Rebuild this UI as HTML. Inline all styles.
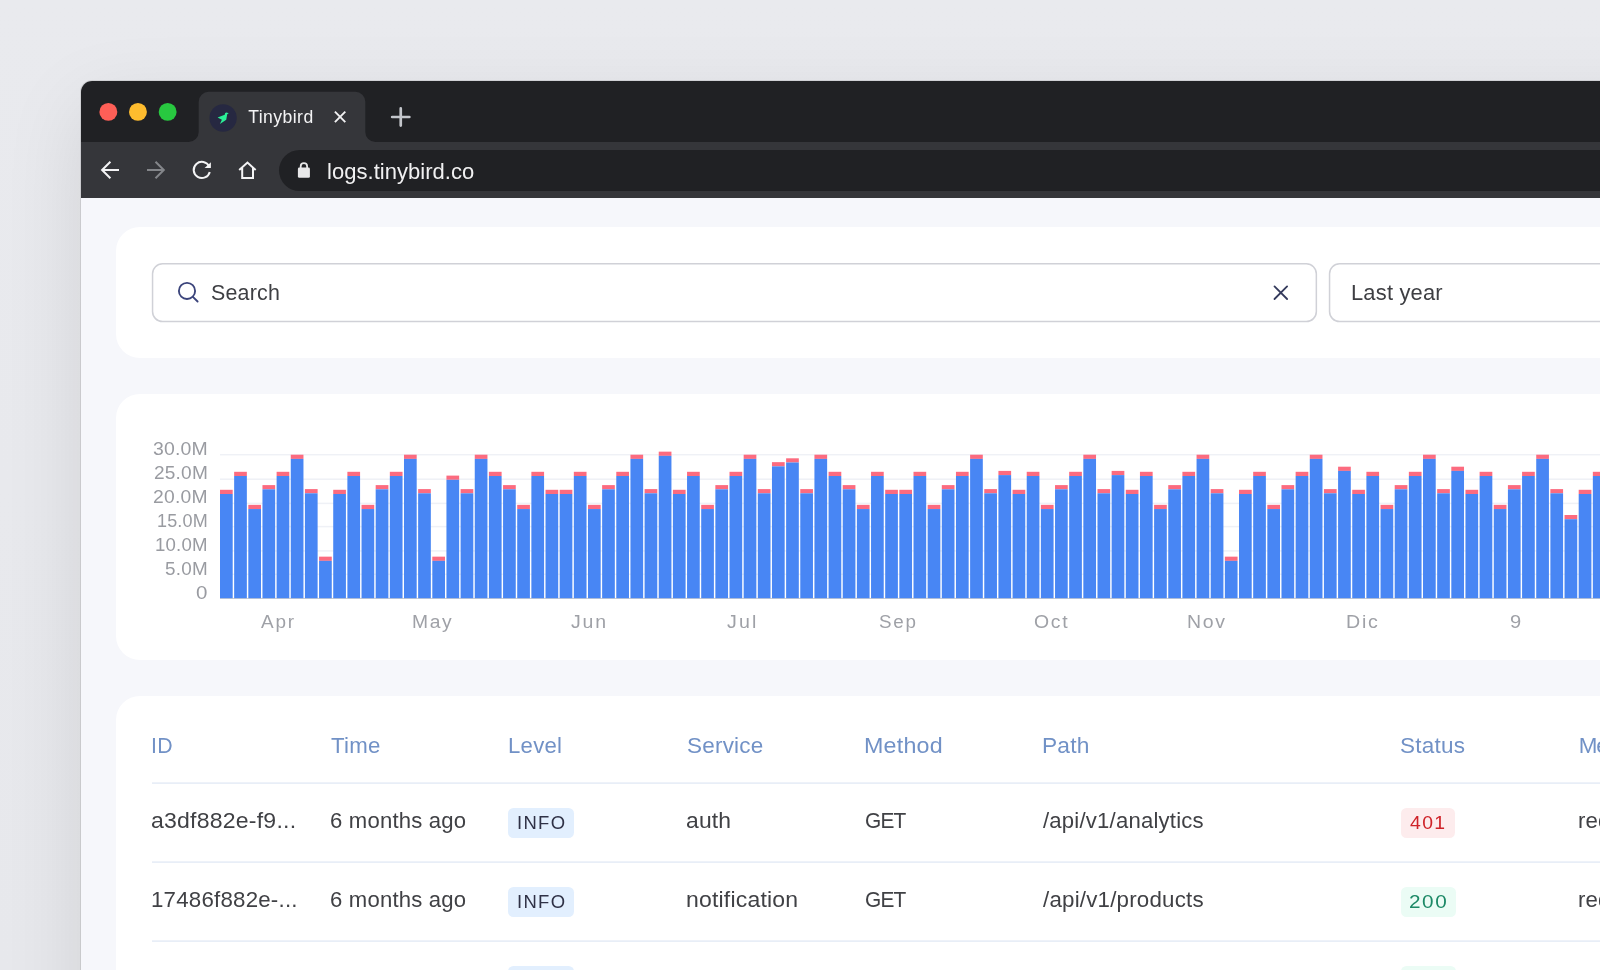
<!DOCTYPE html>
<html lang="en"><head><meta charset="utf-8"><title>Tinybird</title>
<style>
*{box-sizing:border-box;margin:0;padding:0}
html,body{width:1600px;height:970px;overflow:hidden}
body{background:#e8e9ed;font-family:"Liberation Sans",sans-serif;position:relative}
.abs{position:absolute}
.stage{position:absolute;left:0;top:0;width:1600px;height:970px;overflow:hidden;
  background:linear-gradient(180deg,#e9eaee 0%,#e7e8ec 100%)}
.win{position:absolute;left:81px;top:81.25px;width:1700px;height:1000px;border-radius:11px 0 0 0;
  background:#f6f7fb;box-shadow:0 0 0 1px rgba(0,0,0,.085),0 25px 80px rgba(0,0,0,.10);overflow:hidden}
.title{position:absolute;left:0;top:0;width:100%;height:60.5px;background:#202124}
.tool{position:absolute;left:0;top:60.5px;width:100%;height:56.25px;background:#35363a}
.url{position:absolute;left:278.6px;top:149.6px;width:1500px;height:41.3px;border-radius:21px;background:#202124}
.tx{position:absolute;white-space:nowrap;transform-origin:0 0}
.txl{position:absolute;left:0;top:0;width:1600px;height:970px;will-change:transform}
.urltxt{font-size:22px;line-height:24px;color:#f1f1f2}
.tabtxt{font-size:17.6px;line-height:22px;color:#f4f4f5}
.card{position:absolute;left:116.25px;width:1600px;background:#fff;border-radius:24px 0 0 24px}
.t21{font-size:22.3px;line-height:26px;color:#3e3f43}
.xl{font-size:17.5px;line-height:20px;color:#9fa1a7}
.ylt{font-size:18.8px;line-height:20px;color:#999ba1}
.th{font-size:22.4px;line-height:26px;color:#7191c6}
.td{font-size:22.2px;line-height:26px;color:#404145}
.bdg{position:absolute;height:29.9px;border-radius:5.5px}
.bt{font-size:18px;line-height:30px}
.bn{font-size:18.5px;line-height:30px}
</style></head>
<body>
<div class="stage">
<div class="win">
  <div class="title"></div>
  <div class="tool"></div>
</div>

<!-- browser chrome: tab shape + icons -->
<svg class="abs" style="left:0;top:0" width="1600" height="220" viewBox="0 0 1600 220">
  <path d="M188.7 141.9 A10 10 0 0 0 198.7 131.9 L198.7 101.7 A10 10 0 0 1 208.7 91.7 L355.3 91.7 A10 10 0 0 1 365.3 101.7 L365.3 131.9 A10 10 0 0 0 375.3 141.9 Z" fill="#35363a"/>
  <circle cx="108.35" cy="111.9" r="8.95" fill="#fe5f57"/><circle cx="137.95" cy="111.9" r="8.95" fill="#febc2e"/><circle cx="167.65" cy="111.9" r="8.95" fill="#28c840"/>
  <circle cx="223.1" cy="118" r="13.65" fill="#262841"/>
  <path d="M217.6 117.5 L224.7 114.75 L225.15 112.9 L226.55 112.4 L228.75 113.35 L227.2 114.3 L226.25 119.7 L219.9 124.05 L221.9 119.85 Z" fill="#2bef97"/>
  <path d="M334.9 111.7 L345.3 122.1 M345.3 111.7 L334.9 122.1" stroke="#f1f1f2" stroke-width="1.9" fill="none"/>
  <path d="M392.15 117 L409.35 117 M400.75 108.4 L400.75 125.6" stroke="#c3c6cb" stroke-width="2.7" stroke-linecap="round" fill="none"/>
  <path d="M119 170 L102.4 170 M110.4 161.7 L102.1 170 L110.4 178.3" stroke="#f4f4f5" stroke-width="2" fill="none" stroke-linejoin="miter"/>
  <path d="M147 170 L163.5 170 M155.5 161.7 L163.8 170 L155.5 178.3" stroke="#84868a" stroke-width="2" fill="none"/>
  <path d="M209.2 166.4 A8.15 8.15 0 1 0 209.75 171.9" stroke="#f4f4f5" stroke-width="2" fill="none"/>
  <path d="M210.9 162.2 L210.9 168 L204.6 168 Z" fill="#f4f4f5"/>
  <path d="M239.2 170 L247.45 162.6 L255.7 170 M242.2 168 L242.2 178 L253 178 L253 168" stroke="#f4f4f5" stroke-width="2" fill="none"/>
</svg>
<div class="url"></div>
<svg class="abs" style="left:290px;top:155px" width="30" height="30" viewBox="290 155 30 30">
  <path d="M300.7 168 L300.7 166.3 A3.2 3.2 0 0 1 307.1 166.3 L307.1 168" stroke="#e8e8e9" stroke-width="1.8" fill="none"/>
  <rect x="297.9" y="167.6" width="12" height="10.2" rx="1.4" fill="#e8e8e9"/>
</svg>

<!-- card 1: search -->
<div class="card" style="top:227px;height:131px"></div>
<svg class="abs" style="left:0;top:250px" width="1600" height="90" viewBox="0 250 1600 90">
  <rect x="152.55" y="263.75" width="1163.8" height="57.8" rx="10" fill="#fff" stroke="#d0d1d7" stroke-width="1.5"/>
  <rect x="1329.55" y="263.75" width="400" height="57.8" rx="10" fill="#fff" stroke="#d0d1d7" stroke-width="1.5"/>
</svg>
<svg class="abs" style="left:170px;top:275px" width="40" height="34" viewBox="170 275 40 34">
  <circle cx="187" cy="290.9" r="8.1" stroke="#3b447b" stroke-width="1.85" fill="none"/>
  <path d="M192.9 296.9 L197.6 301.5" stroke="#3b447b" stroke-width="1.85" stroke-linecap="round"/>
</svg>
<svg class="abs" style="left:1268px;top:280px" width="26" height="26" viewBox="1268 280 26 26">
  <path d="M1274.5 286.4 L1287.1 299 M1287.1 286.4 L1274.5 299" stroke="#343a5c" stroke-width="1.8" stroke-linecap="round" fill="none"/>
</svg>

<!-- card 2: chart -->
<div class="card" style="top:394px;height:266.3px"></div>
<svg class="abs" style="left:0;top:0" width="1600" height="970" viewBox="0 0 1600 970"><rect x="220" y="453.95" width="1400" height="1.5" fill="#eff1f6"/><rect x="220" y="478.45" width="1400" height="1.5" fill="#eff1f6"/><rect x="220" y="502.65" width="1400" height="1.5" fill="#eff1f6"/><rect x="220" y="525.85" width="1400" height="1.5" fill="#eff1f6"/><rect x="220" y="550.15" width="1400" height="1.5" fill="#eff1f6"/><rect x="220" y="573.55" width="1400" height="1.5" fill="#eff1f6"/><rect x="220" y="597.9" width="1400" height="1.1" fill="#c9cbd0"/><rect x="220.00" y="489.80" width="12.7" height="4.2" fill="#fc6b7f"/><rect x="220.00" y="494.00" width="12.7" height="104.20" fill="#4886f4"/><rect x="234.15" y="471.80" width="12.7" height="4.2" fill="#fc6b7f"/><rect x="234.15" y="476.00" width="12.7" height="122.20" fill="#4886f4"/><rect x="248.31" y="504.85" width="12.7" height="4.2" fill="#fc6b7f"/><rect x="248.31" y="509.05" width="12.7" height="89.15" fill="#4886f4"/><rect x="262.46" y="485.10" width="12.7" height="4.2" fill="#fc6b7f"/><rect x="262.46" y="489.30" width="12.7" height="108.90" fill="#4886f4"/><rect x="276.61" y="471.80" width="12.7" height="4.2" fill="#fc6b7f"/><rect x="276.61" y="476.00" width="12.7" height="122.20" fill="#4886f4"/><rect x="290.76" y="454.70" width="12.7" height="4.2" fill="#fc6b7f"/><rect x="290.76" y="458.90" width="12.7" height="139.30" fill="#4886f4"/><rect x="304.92" y="489.10" width="12.7" height="4.2" fill="#fc6b7f"/><rect x="304.92" y="493.30" width="12.7" height="104.90" fill="#4886f4"/><rect x="319.07" y="556.65" width="12.7" height="4.2" fill="#fc6b7f"/><rect x="319.07" y="560.85" width="12.7" height="37.35" fill="#4886f4"/><rect x="333.22" y="489.80" width="12.7" height="4.2" fill="#fc6b7f"/><rect x="333.22" y="494.00" width="12.7" height="104.20" fill="#4886f4"/><rect x="347.38" y="471.80" width="12.7" height="4.2" fill="#fc6b7f"/><rect x="347.38" y="476.00" width="12.7" height="122.20" fill="#4886f4"/><rect x="361.53" y="504.85" width="12.7" height="4.2" fill="#fc6b7f"/><rect x="361.53" y="509.05" width="12.7" height="89.15" fill="#4886f4"/><rect x="375.68" y="485.10" width="12.7" height="4.2" fill="#fc6b7f"/><rect x="375.68" y="489.30" width="12.7" height="108.90" fill="#4886f4"/><rect x="389.84" y="471.80" width="12.7" height="4.2" fill="#fc6b7f"/><rect x="389.84" y="476.00" width="12.7" height="122.20" fill="#4886f4"/><rect x="403.99" y="454.70" width="12.7" height="4.2" fill="#fc6b7f"/><rect x="403.99" y="458.90" width="12.7" height="139.30" fill="#4886f4"/><rect x="418.14" y="489.10" width="12.7" height="4.2" fill="#fc6b7f"/><rect x="418.14" y="493.30" width="12.7" height="104.90" fill="#4886f4"/><rect x="432.30" y="556.65" width="12.7" height="4.2" fill="#fc6b7f"/><rect x="432.30" y="560.85" width="12.7" height="37.35" fill="#4886f4"/><rect x="446.45" y="475.60" width="12.7" height="4.2" fill="#fc6b7f"/><rect x="446.45" y="479.80" width="12.7" height="118.40" fill="#4886f4"/><rect x="460.60" y="489.10" width="12.7" height="4.2" fill="#fc6b7f"/><rect x="460.60" y="493.30" width="12.7" height="104.90" fill="#4886f4"/><rect x="474.75" y="454.70" width="12.7" height="4.2" fill="#fc6b7f"/><rect x="474.75" y="458.90" width="12.7" height="139.30" fill="#4886f4"/><rect x="488.91" y="471.80" width="12.7" height="4.2" fill="#fc6b7f"/><rect x="488.91" y="476.00" width="12.7" height="122.20" fill="#4886f4"/><rect x="503.06" y="485.10" width="12.7" height="4.2" fill="#fc6b7f"/><rect x="503.06" y="489.30" width="12.7" height="108.90" fill="#4886f4"/><rect x="517.21" y="504.85" width="12.7" height="4.2" fill="#fc6b7f"/><rect x="517.21" y="509.05" width="12.7" height="89.15" fill="#4886f4"/><rect x="531.37" y="471.80" width="12.7" height="4.2" fill="#fc6b7f"/><rect x="531.37" y="476.00" width="12.7" height="122.20" fill="#4886f4"/><rect x="545.52" y="489.80" width="12.7" height="4.2" fill="#fc6b7f"/><rect x="545.52" y="494.00" width="12.7" height="104.20" fill="#4886f4"/><rect x="559.67" y="489.80" width="12.7" height="4.2" fill="#fc6b7f"/><rect x="559.67" y="494.00" width="12.7" height="104.20" fill="#4886f4"/><rect x="573.83" y="471.80" width="12.7" height="4.2" fill="#fc6b7f"/><rect x="573.83" y="476.00" width="12.7" height="122.20" fill="#4886f4"/><rect x="587.98" y="504.85" width="12.7" height="4.2" fill="#fc6b7f"/><rect x="587.98" y="509.05" width="12.7" height="89.15" fill="#4886f4"/><rect x="602.13" y="485.10" width="12.7" height="4.2" fill="#fc6b7f"/><rect x="602.13" y="489.30" width="12.7" height="108.90" fill="#4886f4"/><rect x="616.28" y="471.80" width="12.7" height="4.2" fill="#fc6b7f"/><rect x="616.28" y="476.00" width="12.7" height="122.20" fill="#4886f4"/><rect x="630.44" y="454.70" width="12.7" height="4.2" fill="#fc6b7f"/><rect x="630.44" y="458.90" width="12.7" height="139.30" fill="#4886f4"/><rect x="644.59" y="489.10" width="12.7" height="4.2" fill="#fc6b7f"/><rect x="644.59" y="493.30" width="12.7" height="104.90" fill="#4886f4"/><rect x="658.74" y="451.65" width="12.7" height="4.2" fill="#fc6b7f"/><rect x="658.74" y="455.85" width="12.7" height="142.35" fill="#4886f4"/><rect x="672.90" y="489.80" width="12.7" height="4.2" fill="#fc6b7f"/><rect x="672.90" y="494.00" width="12.7" height="104.20" fill="#4886f4"/><rect x="687.05" y="471.80" width="12.7" height="4.2" fill="#fc6b7f"/><rect x="687.05" y="476.00" width="12.7" height="122.20" fill="#4886f4"/><rect x="701.20" y="504.85" width="12.7" height="4.2" fill="#fc6b7f"/><rect x="701.20" y="509.05" width="12.7" height="89.15" fill="#4886f4"/><rect x="715.36" y="485.10" width="12.7" height="4.2" fill="#fc6b7f"/><rect x="715.36" y="489.30" width="12.7" height="108.90" fill="#4886f4"/><rect x="729.51" y="471.80" width="12.7" height="4.2" fill="#fc6b7f"/><rect x="729.51" y="476.00" width="12.7" height="122.20" fill="#4886f4"/><rect x="743.66" y="454.70" width="12.7" height="4.2" fill="#fc6b7f"/><rect x="743.66" y="458.90" width="12.7" height="139.30" fill="#4886f4"/><rect x="757.81" y="489.10" width="12.7" height="4.2" fill="#fc6b7f"/><rect x="757.81" y="493.30" width="12.7" height="104.90" fill="#4886f4"/><rect x="771.97" y="462.15" width="12.7" height="4.2" fill="#fc6b7f"/><rect x="771.97" y="466.35" width="12.7" height="131.85" fill="#4886f4"/><rect x="786.12" y="458.30" width="12.7" height="4.2" fill="#fc6b7f"/><rect x="786.12" y="462.50" width="12.7" height="135.70" fill="#4886f4"/><rect x="800.27" y="489.10" width="12.7" height="4.2" fill="#fc6b7f"/><rect x="800.27" y="493.30" width="12.7" height="104.90" fill="#4886f4"/><rect x="814.43" y="454.70" width="12.7" height="4.2" fill="#fc6b7f"/><rect x="814.43" y="458.90" width="12.7" height="139.30" fill="#4886f4"/><rect x="828.58" y="471.80" width="12.7" height="4.2" fill="#fc6b7f"/><rect x="828.58" y="476.00" width="12.7" height="122.20" fill="#4886f4"/><rect x="842.73" y="485.10" width="12.7" height="4.2" fill="#fc6b7f"/><rect x="842.73" y="489.30" width="12.7" height="108.90" fill="#4886f4"/><rect x="856.88" y="504.85" width="12.7" height="4.2" fill="#fc6b7f"/><rect x="856.88" y="509.05" width="12.7" height="89.15" fill="#4886f4"/><rect x="871.04" y="471.80" width="12.7" height="4.2" fill="#fc6b7f"/><rect x="871.04" y="476.00" width="12.7" height="122.20" fill="#4886f4"/><rect x="885.19" y="489.80" width="12.7" height="4.2" fill="#fc6b7f"/><rect x="885.19" y="494.00" width="12.7" height="104.20" fill="#4886f4"/><rect x="899.34" y="489.80" width="12.7" height="4.2" fill="#fc6b7f"/><rect x="899.34" y="494.00" width="12.7" height="104.20" fill="#4886f4"/><rect x="913.50" y="471.80" width="12.7" height="4.2" fill="#fc6b7f"/><rect x="913.50" y="476.00" width="12.7" height="122.20" fill="#4886f4"/><rect x="927.65" y="504.85" width="12.7" height="4.2" fill="#fc6b7f"/><rect x="927.65" y="509.05" width="12.7" height="89.15" fill="#4886f4"/><rect x="941.80" y="485.10" width="12.7" height="4.2" fill="#fc6b7f"/><rect x="941.80" y="489.30" width="12.7" height="108.90" fill="#4886f4"/><rect x="955.96" y="471.80" width="12.7" height="4.2" fill="#fc6b7f"/><rect x="955.96" y="476.00" width="12.7" height="122.20" fill="#4886f4"/><rect x="970.11" y="454.70" width="12.7" height="4.2" fill="#fc6b7f"/><rect x="970.11" y="458.90" width="12.7" height="139.30" fill="#4886f4"/><rect x="984.26" y="489.10" width="12.7" height="4.2" fill="#fc6b7f"/><rect x="984.26" y="493.30" width="12.7" height="104.90" fill="#4886f4"/><rect x="998.42" y="470.90" width="12.7" height="4.2" fill="#fc6b7f"/><rect x="998.42" y="475.10" width="12.7" height="123.10" fill="#4886f4"/><rect x="1012.57" y="489.80" width="12.7" height="4.2" fill="#fc6b7f"/><rect x="1012.57" y="494.00" width="12.7" height="104.20" fill="#4886f4"/><rect x="1026.72" y="471.80" width="12.7" height="4.2" fill="#fc6b7f"/><rect x="1026.72" y="476.00" width="12.7" height="122.20" fill="#4886f4"/><rect x="1040.87" y="504.85" width="12.7" height="4.2" fill="#fc6b7f"/><rect x="1040.87" y="509.05" width="12.7" height="89.15" fill="#4886f4"/><rect x="1055.03" y="485.10" width="12.7" height="4.2" fill="#fc6b7f"/><rect x="1055.03" y="489.30" width="12.7" height="108.90" fill="#4886f4"/><rect x="1069.18" y="471.80" width="12.7" height="4.2" fill="#fc6b7f"/><rect x="1069.18" y="476.00" width="12.7" height="122.20" fill="#4886f4"/><rect x="1083.33" y="454.70" width="12.7" height="4.2" fill="#fc6b7f"/><rect x="1083.33" y="458.90" width="12.7" height="139.30" fill="#4886f4"/><rect x="1097.49" y="489.10" width="12.7" height="4.2" fill="#fc6b7f"/><rect x="1097.49" y="493.30" width="12.7" height="104.90" fill="#4886f4"/><rect x="1111.64" y="470.90" width="12.7" height="4.2" fill="#fc6b7f"/><rect x="1111.64" y="475.10" width="12.7" height="123.10" fill="#4886f4"/><rect x="1125.79" y="489.80" width="12.7" height="4.2" fill="#fc6b7f"/><rect x="1125.79" y="494.00" width="12.7" height="104.20" fill="#4886f4"/><rect x="1139.95" y="471.80" width="12.7" height="4.2" fill="#fc6b7f"/><rect x="1139.95" y="476.00" width="12.7" height="122.20" fill="#4886f4"/><rect x="1154.10" y="504.85" width="12.7" height="4.2" fill="#fc6b7f"/><rect x="1154.10" y="509.05" width="12.7" height="89.15" fill="#4886f4"/><rect x="1168.25" y="485.10" width="12.7" height="4.2" fill="#fc6b7f"/><rect x="1168.25" y="489.30" width="12.7" height="108.90" fill="#4886f4"/><rect x="1182.40" y="471.80" width="12.7" height="4.2" fill="#fc6b7f"/><rect x="1182.40" y="476.00" width="12.7" height="122.20" fill="#4886f4"/><rect x="1196.56" y="454.70" width="12.7" height="4.2" fill="#fc6b7f"/><rect x="1196.56" y="458.90" width="12.7" height="139.30" fill="#4886f4"/><rect x="1210.71" y="489.10" width="12.7" height="4.2" fill="#fc6b7f"/><rect x="1210.71" y="493.30" width="12.7" height="104.90" fill="#4886f4"/><rect x="1224.86" y="556.65" width="12.7" height="4.2" fill="#fc6b7f"/><rect x="1224.86" y="560.85" width="12.7" height="37.35" fill="#4886f4"/><rect x="1239.02" y="489.80" width="12.7" height="4.2" fill="#fc6b7f"/><rect x="1239.02" y="494.00" width="12.7" height="104.20" fill="#4886f4"/><rect x="1253.17" y="471.80" width="12.7" height="4.2" fill="#fc6b7f"/><rect x="1253.17" y="476.00" width="12.7" height="122.20" fill="#4886f4"/><rect x="1267.32" y="504.85" width="12.7" height="4.2" fill="#fc6b7f"/><rect x="1267.32" y="509.05" width="12.7" height="89.15" fill="#4886f4"/><rect x="1281.48" y="485.10" width="12.7" height="4.2" fill="#fc6b7f"/><rect x="1281.48" y="489.30" width="12.7" height="108.90" fill="#4886f4"/><rect x="1295.63" y="471.80" width="12.7" height="4.2" fill="#fc6b7f"/><rect x="1295.63" y="476.00" width="12.7" height="122.20" fill="#4886f4"/><rect x="1309.78" y="454.70" width="12.7" height="4.2" fill="#fc6b7f"/><rect x="1309.78" y="458.90" width="12.7" height="139.30" fill="#4886f4"/><rect x="1323.93" y="489.10" width="12.7" height="4.2" fill="#fc6b7f"/><rect x="1323.93" y="493.30" width="12.7" height="104.90" fill="#4886f4"/><rect x="1338.09" y="466.70" width="12.7" height="4.2" fill="#fc6b7f"/><rect x="1338.09" y="470.90" width="12.7" height="127.30" fill="#4886f4"/><rect x="1352.24" y="489.80" width="12.7" height="4.2" fill="#fc6b7f"/><rect x="1352.24" y="494.00" width="12.7" height="104.20" fill="#4886f4"/><rect x="1366.39" y="471.80" width="12.7" height="4.2" fill="#fc6b7f"/><rect x="1366.39" y="476.00" width="12.7" height="122.20" fill="#4886f4"/><rect x="1380.55" y="504.85" width="12.7" height="4.2" fill="#fc6b7f"/><rect x="1380.55" y="509.05" width="12.7" height="89.15" fill="#4886f4"/><rect x="1394.70" y="485.10" width="12.7" height="4.2" fill="#fc6b7f"/><rect x="1394.70" y="489.30" width="12.7" height="108.90" fill="#4886f4"/><rect x="1408.85" y="471.80" width="12.7" height="4.2" fill="#fc6b7f"/><rect x="1408.85" y="476.00" width="12.7" height="122.20" fill="#4886f4"/><rect x="1423.01" y="454.70" width="12.7" height="4.2" fill="#fc6b7f"/><rect x="1423.01" y="458.90" width="12.7" height="139.30" fill="#4886f4"/><rect x="1437.16" y="489.10" width="12.7" height="4.2" fill="#fc6b7f"/><rect x="1437.16" y="493.30" width="12.7" height="104.90" fill="#4886f4"/><rect x="1451.31" y="466.70" width="12.7" height="4.2" fill="#fc6b7f"/><rect x="1451.31" y="470.90" width="12.7" height="127.30" fill="#4886f4"/><rect x="1465.46" y="489.80" width="12.7" height="4.2" fill="#fc6b7f"/><rect x="1465.46" y="494.00" width="12.7" height="104.20" fill="#4886f4"/><rect x="1479.62" y="471.80" width="12.7" height="4.2" fill="#fc6b7f"/><rect x="1479.62" y="476.00" width="12.7" height="122.20" fill="#4886f4"/><rect x="1493.77" y="504.85" width="12.7" height="4.2" fill="#fc6b7f"/><rect x="1493.77" y="509.05" width="12.7" height="89.15" fill="#4886f4"/><rect x="1507.92" y="485.10" width="12.7" height="4.2" fill="#fc6b7f"/><rect x="1507.92" y="489.30" width="12.7" height="108.90" fill="#4886f4"/><rect x="1522.08" y="471.80" width="12.7" height="4.2" fill="#fc6b7f"/><rect x="1522.08" y="476.00" width="12.7" height="122.20" fill="#4886f4"/><rect x="1536.23" y="454.70" width="12.7" height="4.2" fill="#fc6b7f"/><rect x="1536.23" y="458.90" width="12.7" height="139.30" fill="#4886f4"/><rect x="1550.38" y="489.10" width="12.7" height="4.2" fill="#fc6b7f"/><rect x="1550.38" y="493.30" width="12.7" height="104.90" fill="#4886f4"/><rect x="1564.54" y="515.00" width="12.7" height="4.2" fill="#fc6b7f"/><rect x="1564.54" y="519.20" width="12.7" height="79.00" fill="#4886f4"/><rect x="1578.69" y="489.80" width="12.7" height="4.2" fill="#fc6b7f"/><rect x="1578.69" y="494.00" width="12.7" height="104.20" fill="#4886f4"/><rect x="1592.84" y="471.80" width="12.7" height="4.2" fill="#fc6b7f"/><rect x="1592.84" y="476.00" width="12.7" height="122.20" fill="#4886f4"/></svg>


<!-- card 3: table -->
<div class="card" style="top:695.8px;height:400px"></div>
<svg class="abs" style="left:0;top:770px" width="1600" height="200" viewBox="0 770 1600 200">
  <rect x="152" y="782.35" width="1500" height="1.5" fill="#e5ecf6"/>
  <rect x="152" y="861.35" width="1500" height="1.5" fill="#e5ecf6"/>
  <rect x="152" y="940.35" width="1500" height="1.5" fill="#e5ecf6"/>
</svg>
<div class="bdg" style="left:508.4px;top:807.8px;width:65.8px;background:#e2effe"></div>
<div class="bdg" style="left:508.4px;top:886.8px;width:65.8px;background:#e2effe"></div>
<div class="bdg" style="left:508.4px;top:965.9px;width:65.8px;background:#e2effe"></div>
<div class="bdg" style="left:1400.7px;top:807.7px;width:53.9px;background:#fdeced"></div>
<div class="bdg" style="left:1400.7px;top:886.8px;width:55.7px;background:#ebfcf5"></div>
<div class="bdg" style="left:1400.7px;top:965.9px;width:55.7px;background:#ebfcf5"></div>
<div class="txl">
<div class="tx th" style="left:1578.85px;top:732.5px;letter-spacing:-1.2px">Message</div>
<div class="tx td" style="left:1577.9px;top:808px;letter-spacing:.2px">request completed</div>
<div class="tx td" style="left:1577.9px;top:887px;letter-spacing:.2px">request completed</div>
<div class="tx td" style="left:151.4px;top:966px;letter-spacing:.8px">b41df882e-f...</div>
<div class="tx td" style="left:330px;top:966px;letter-spacing:.63px">6 months ago</div>
<div class="tx td" style="left:686.6px;top:966px;letter-spacing:.8px">products</div>
<div class="tx td" style="left:864.4px;top:966px;letter-spacing:-1.5px">GET</div>
<div class="tx td" style="left:1042px;top:966px;letter-spacing:.7px">/api/v1/checkout</div>
<div id="tab" class="tx tabtxt" style="left:248.23px;top:106.1px;letter-spacing:0.437px;">Tinybird</div>
<div id="url" class="tx urltxt" style="left:327.02px;top:159.5px;letter-spacing:0.033px;">logs.tinybird.co</div>
<div id="srch" class="tx t21" style="left:211.15px;top:279.7px;letter-spacing:0.193px;transform:scaleX(0.9611);">Search</div>
<div id="last" class="tx t21" style="left:1350.94px;top:279.7px;letter-spacing:0.194px;transform:scaleX(0.9824);">Last year</div>
<div id="xa" class="tx xl" style="left:261.29px;top:611.6px;letter-spacing:1.672px;transform:scaleX(1.0807);">Apr</div>
<div id="xb" class="tx xl" style="left:411.98px;top:611.6px;letter-spacing:1.503px;transform:scaleX(1.1005);">May</div>
<div id="xc" class="tx xl" style="left:571.25px;top:611.6px;letter-spacing:1.600px;transform:scaleX(1.1137);">Jun</div>
<div id="xd" class="tx xl" style="left:727.17px;top:611.6px;letter-spacing:1.924px;transform:scaleX(1.1200);">Jul</div>
<div id="xe" class="tx xl" style="left:879.09px;top:611.6px;letter-spacing:1.609px;transform:scaleX(1.0735);">Sep</div>
<div id="xf" class="tx xl" style="left:1034.30px;top:611.6px;letter-spacing:1.577px;transform:scaleX(1.1092);">Oct</div>
<div id="xg" class="tx xl" style="left:1187.30px;top:611.6px;letter-spacing:1.549px;transform:scaleX(1.1125);">Nov</div>
<div id="xh" class="tx xl" style="left:1345.84px;top:611.6px;letter-spacing:1.583px;transform:scaleX(1.1200);">Dic</div>
<div id="xi" class="tx xl" style="left:1510.02px;top:611.6px;letter-spacing:0.000px;transform:scaleX(1.1500);">9</div>
<div id="h1" class="tx th" style="left:150.62px;top:732.5px;letter-spacing:0.315px;transform:scaleX(0.9511);">ID</div>
<div id="h2" class="tx th" style="left:331.25px;top:732.5px;letter-spacing:0.250px;transform:scaleX(0.9938);">Time</div>
<div id="h3" class="tx th" style="left:508.11px;top:732.5px;letter-spacing:0.246px;transform:scaleX(0.9894);">Level</div>
<div id="h4" class="tx th" style="left:686.52px;top:732.5px;letter-spacing:0.204px;transform:scaleX(1.0049);">Service</div>
<div id="h5" class="tx th" style="left:864.36px;top:732.5px;letter-spacing:0.203px;transform:scaleX(1.0395);">Method</div>
<div id="h6" class="tx th" style="left:1041.61px;top:732.5px;letter-spacing:0.189px;transform:scaleX(1.0154);">Path</div>
<div id="h7" class="tx th" style="left:1400.45px;top:732.5px;letter-spacing:0.251px;transform:scaleX(1.0053);">Status</div>
<div id="a1" class="tx td" style="left:151.15px;top:808.0px;letter-spacing:0.201px;transform:scaleX(1.0394);">a3df882e-f9...</div>
<div id="a2" class="tx td" style="left:329.90px;top:808.0px;letter-spacing:0.200px;transform:scaleX(0.9959);">6 months ago</div>
<div id="a4" class="tx td" style="left:686.25px;top:808.0px;letter-spacing:0.175px;transform:scaleX(1.0317);">auth</div>
<div id="a5" class="tx td" style="left:864.92px;top:808.0px;letter-spacing:-0.820px;transform:scaleX(0.9400);">GET</div>
<div id="a6" class="tx td" style="left:1042.80px;top:808.0px;letter-spacing:0.200px;transform:scaleX(0.9969);">/api/v1/analytics</div>
<div id="b1" class="tx td" style="left:150.76px;top:887.0px;letter-spacing:0.204px;transform:scaleX(1.0051);">17486f882e-...</div>
<div id="b2" class="tx td" style="left:329.90px;top:887.0px;letter-spacing:0.200px;transform:scaleX(0.9959);">6 months ago</div>
<div id="b4" class="tx td" style="left:686.49px;top:887.0px;letter-spacing:0.180px;transform:scaleX(1.0370);">notification</div>
<div id="b5" class="tx td" style="left:864.92px;top:887.0px;letter-spacing:-0.820px;transform:scaleX(0.9400);">GET</div>
<div id="b6" class="tx td" style="left:1042.80px;top:887.0px;letter-spacing:0.200px;transform:scaleX(1.0060);">/api/v1/products</div>
<div id="i1" class="tx bt" style="left:517.01px;top:807.8px;letter-spacing:1.299px;transform:scaleX(1.0255);color:#2f3146">INFO</div>
<div id="i2" class="tx bt" style="left:517.01px;top:886.8px;letter-spacing:1.299px;transform:scaleX(1.0255);color:#2f3146">INFO</div>
<div id="s1" class="tx bn" style="left:1410.40px;top:807.7px;letter-spacing:1.300px;transform:scaleX(1.0471);color:#cf2329">401</div>
<div id="s2" class="tx bn" style="left:1409.38px;top:886.8px;letter-spacing:1.385px;transform:scaleX(1.1200);color:#1c8966">200</div>
<div id="y1" class="tx ylt" style="left:153.01px;top:438.66px;letter-spacing:0.168px;transform:scaleX(1.0349);">30.0M</div>
<div id="y2" class="tx ylt" style="left:153.84px;top:462.76px;letter-spacing:0.190px;transform:scaleX(1.0153);">25.0M</div>
<div id="y3" class="tx ylt" style="left:153.38px;top:486.96px;letter-spacing:0.247px;transform:scaleX(1.0260);">20.0M</div>
<div id="y4" class="tx ylt" style="left:156.64px;top:510.66px;letter-spacing:0.167px;transform:scaleX(0.9594);">15.0M</div>
<div id="y5" class="tx ylt" style="left:154.99px;top:534.9px;letter-spacing:0.180px;transform:scaleX(0.9916);">10.0M</div>
<div id="y6" class="tx ylt" style="left:164.90px;top:558.9px;letter-spacing:0.250px;transform:scaleX(1.0041);">5.0M</div>
<div id="y7" class="tx ylt" style="left:195.87px;top:582.9px;letter-spacing:0.000px;transform:scaleX(1.0920);">0</div>
</div>
</div>
</body></html>
